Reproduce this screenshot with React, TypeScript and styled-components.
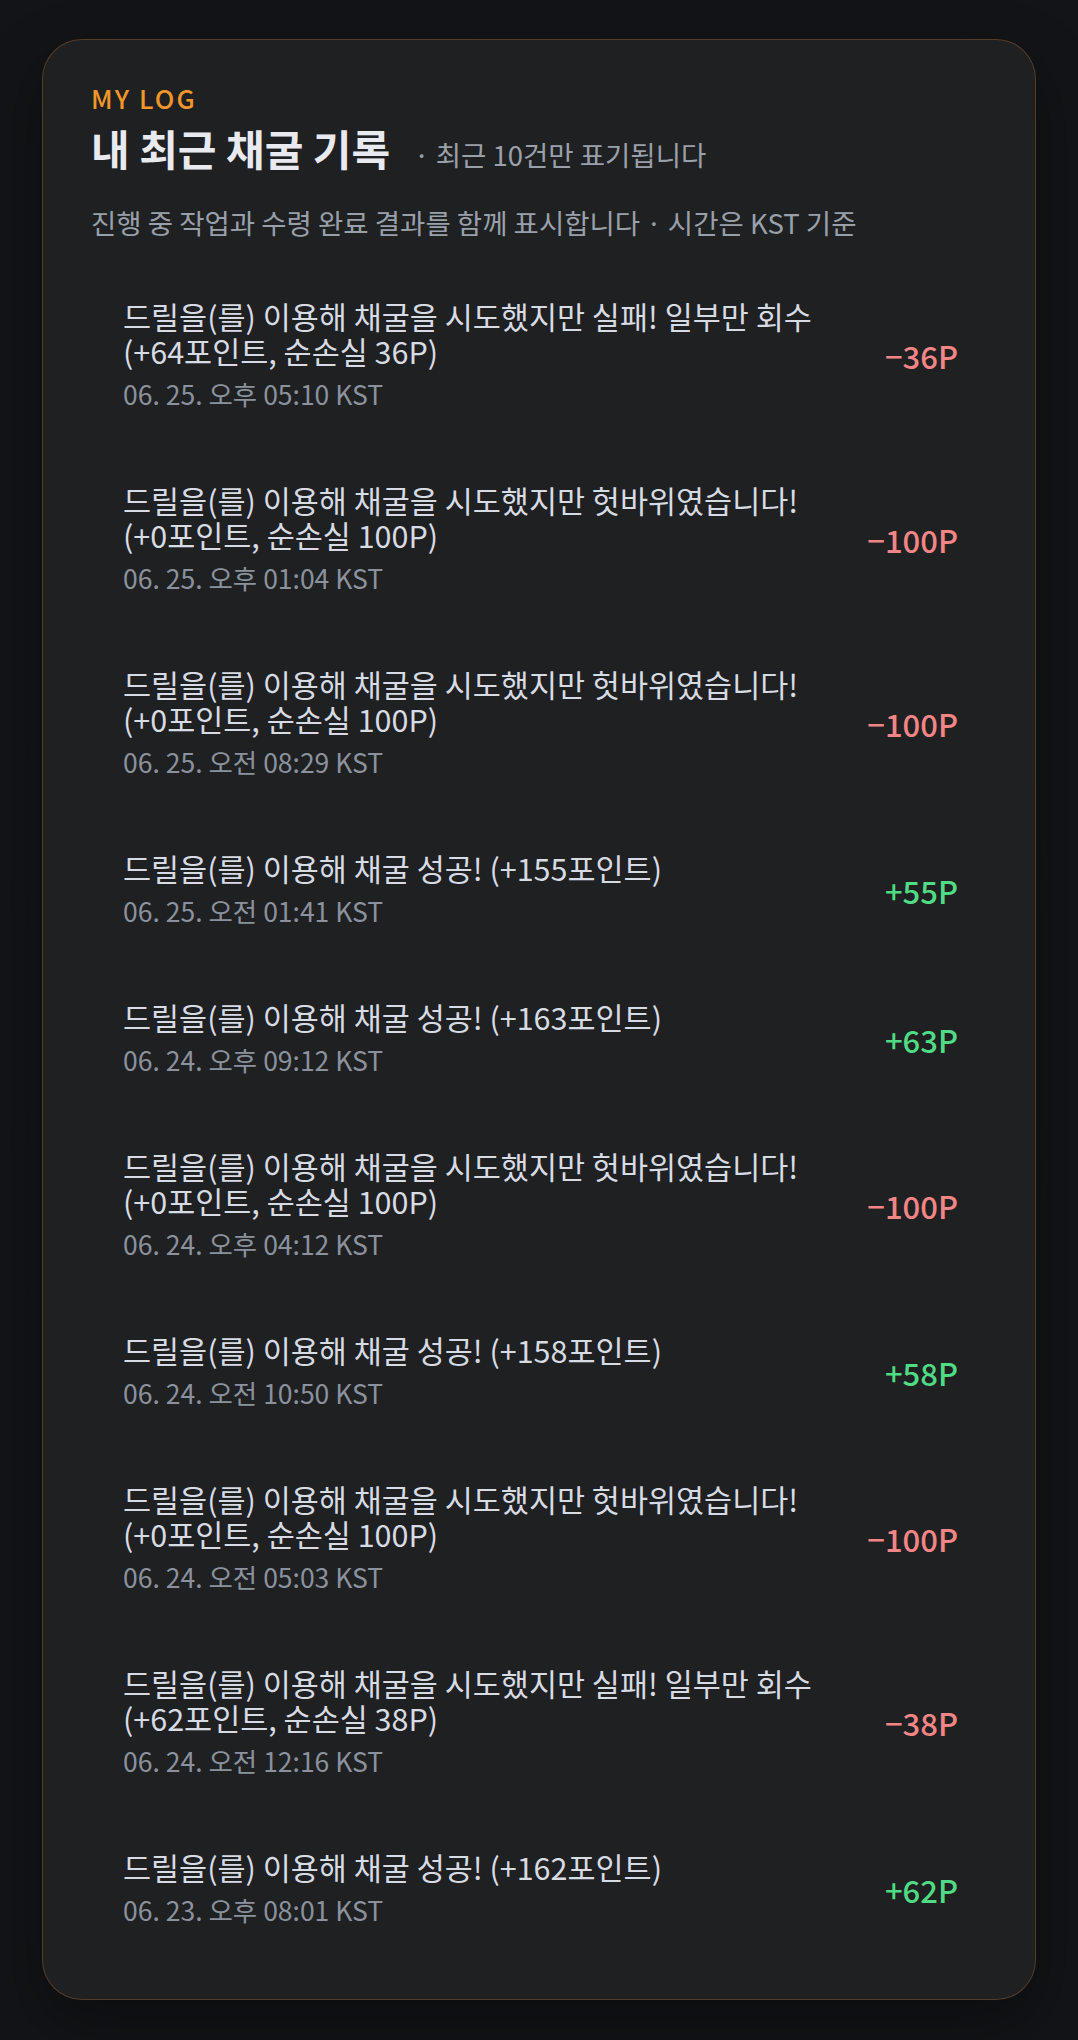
import React from 'react';
import styled, { createGlobalStyle } from 'styled-components';

type LogEntry = {
  id: number;
  message: string[];
  time: string;
  amount: number;
};

const logs: LogEntry[] = [
  {
    id: 1,
    message: ['드릴을(를) 이용해 채굴을 시도했지만 실패! 일부만 회수', '(+64포인트, 순손실 36P)'],
    time: '06. 25. 오후 05:10 KST',
    amount: -36,
  },
  {
    id: 2,
    message: ['드릴을(를) 이용해 채굴을 시도했지만 헛바위였습니다!', '(+0포인트, 순손실 100P)'],
    time: '06. 25. 오후 01:04 KST',
    amount: -100,
  },
  {
    id: 3,
    message: ['드릴을(를) 이용해 채굴을 시도했지만 헛바위였습니다!', '(+0포인트, 순손실 100P)'],
    time: '06. 25. 오전 08:29 KST',
    amount: -100,
  },
  { id: 4, message: ['드릴을(를) 이용해 채굴 성공! (+155포인트)'], time: '06. 25. 오전 01:41 KST', amount: 55 },
  { id: 5, message: ['드릴을(를) 이용해 채굴 성공! (+163포인트)'], time: '06. 24. 오후 09:12 KST', amount: 63 },
  {
    id: 6,
    message: ['드릴을(를) 이용해 채굴을 시도했지만 헛바위였습니다!', '(+0포인트, 순손실 100P)'],
    time: '06. 24. 오후 04:12 KST',
    amount: -100,
  },
  { id: 7, message: ['드릴을(를) 이용해 채굴 성공! (+158포인트)'], time: '06. 24. 오전 10:50 KST', amount: 58 },
  {
    id: 8,
    message: ['드릴을(를) 이용해 채굴을 시도했지만 헛바위였습니다!', '(+0포인트, 순손실 100P)'],
    time: '06. 24. 오전 05:03 KST',
    amount: -100,
  },
  {
    id: 9,
    message: ['드릴을(를) 이용해 채굴을 시도했지만 실패! 일부만 회수', '(+62포인트, 순손실 38P)'],
    time: '06. 24. 오전 12:16 KST',
    amount: -38,
  },
  { id: 10, message: ['드릴을(를) 이용해 채굴 성공! (+162포인트)'], time: '06. 23. 오후 08:01 KST', amount: 62 },
];

const formatAmount = (value: number) => (value < 0 ? `\u2212${Math.abs(value)}P` : `+${value}P`);

const App: React.FC = () => {
  return (
    <>
      <GlobalStyle />
      <Page>
        <Card>
          <Header>
            <Eyebrow>MY LOG</Eyebrow>
            <TitleRow>
              <Title>내 최근 채굴 기록</Title>
              <TitleNote>· 최근 10건만 표기됩니다</TitleNote>
            </TitleRow>
            <Description>진행 중 작업과 수령 완료 결과를 함께 표시합니다 · 시간은 KST 기준</Description>
          </Header>
          <List>
            {logs.map(({ id, message, time, amount }) => (
              <Row key={id}>
                <RowBody>
                  <Message>
                    {message.map((line, i) => (
                      <span key={i}>{line}</span>
                    ))}
                  </Message>
                  <Time>{time}</Time>
                </RowBody>
                <Amount $positive={amount > 0}>{formatAmount(amount)}</Amount>
              </Row>
            ))}
          </List>
        </Card>
      </Page>
    </>
  );
};

const GlobalStyle = createGlobalStyle`
  html, body {
    margin: 0;
    padding: 0;
    background: #131417;
  }
  body {
    font-family: "Noto Sans CJK KR", "Noto Sans", sans-serif;
    -webkit-font-smoothing: antialiased;
  }
`;

const Page = styled.div`
  min-height: 2040px;
  box-sizing: border-box;
  padding: 39px 42px 40px;
  background: radial-gradient(ellipse at 50% 50%, #17181b 0%, #131417 70%);
`;

const Card = styled.section`
  box-sizing: border-box;
  background: #1f2022;
  border: 1.5px solid rgba(150, 96, 48, 0.45);
  border-radius: 40px;
  padding: 41px 48px 36px;
  box-shadow: 0 24px 60px rgba(0, 0, 0, 0.35);
`;

const Header = styled.header`
  display: flex;
  flex-direction: column;
`;

const Eyebrow = styled.div`
  font-size: 26px;
  line-height: 34px;
  font-weight: 500;
  letter-spacing: 0.08em;
  color: #f0962a;
`;

const TitleRow = styled.div`
  display: flex;
  align-items: baseline;
  gap: 24px;
  margin-top: 6px;
`;

const Title = styled.h2`
  margin: 0;
  font-size: 42px;
  line-height: 54px;
  font-weight: 700;
  color: #e8eaef;
`;

const TitleNote = styled.span`
  font-size: 27.5px;
  color: #9aa0aa;
`;

const Description = styled.p`
  margin: 29px 0 0;
  font-size: 27.5px;
  line-height: 36px;
  color: #9aa0aa;
`;

const List = styled.div`
  display: flex;
  flex-direction: column;
  margin-top: 23px;
`;

const Row = styled.div`
  display: flex;
  align-items: center;
  justify-content: space-between;
  gap: 24px;
  padding: 36px 29px 35px 32px;
`;

const RowBody = styled.div`
  display: flex;
  flex-direction: column;
  min-width: 0;
`;

const Message = styled.div`
  display: flex;
  flex-direction: column;
  font-size: 30.5px;
  line-height: 35px;
  color: #d7dbe3;
`;

const Time = styled.div`
  margin-top: 7px;
  font-size: 26.5px;
  line-height: 36px;
  color: #8b929e;
`;

const Amount = styled.div<{ $positive: boolean }>`
  flex-shrink: 0;
  font-size: 31px;
  font-weight: 500;
  color: ${({ $positive }) => ($positive ? '#4fdc85' : '#f38585')};
`;

export default App;
